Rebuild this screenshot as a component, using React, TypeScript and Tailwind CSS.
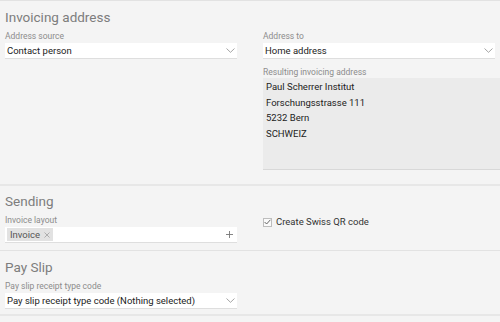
import React from "react";

function Chevron() {
  return (
    <svg width="9" height="5" viewBox="0 0 9 5" className="shrink-0">
      <polyline points="0.5,0.5 4.5,4.3 8.5,0.5" fill="none" stroke="#9a9a9a" strokeWidth="0.9" />
    </svg>
  );
}

function Label({ children }: { children: React.ReactNode }) {
  return <div className="mt-[6px] mb-[2px] text-[8.5px] leading-[10px] text-[#8c8c8c]">{children}</div>;
}

function SectionTitle({ children }: { children: React.ReactNode }) {
  return <div className="text-[13.5px] leading-[16px] text-[#7d7d7d]">{children}</div>;
}

function Select({ value }: { value: string }) {
  return (
    <div className="flex h-[16px] items-center justify-between border-b border-[#dedede] bg-white pl-[2px] pr-[2px]">
      <span className="text-[9.5px] leading-[16px] text-[#222]">{value}</span>
      <Chevron />
    </div>
  );
}

export default function App() {
  const address = ["Paul Scherrer Institut", "Forschungsstrasse 111", "5232 Bern", "SCHWEIZ"];

  return (
    <div
      className="h-[322px] w-[500px] overflow-hidden border-t border-[#e2e2e2] bg-[#f4f4f4]"
      style={{ fontFamily: "Roboto, 'Liberation Sans', sans-serif" }}
    >
      {/* Invoicing address */}
      <section className="border-b-2 border-[#e7e7e7] px-[5px] pt-[8px] pb-[14px]">
        <SectionTitle>Invoicing address</SectionTitle>
        <div className="grid grid-cols-2 gap-x-[26px]">
          <div>
            <Label>Address source</Label>
            <Select value="Contact person" />
          </div>
          <div>
            <Label>Address to</Label>
            <Select value="Home address" />
            <div className="mt-[8px] mb-[1px] text-[8.5px] leading-[10px] text-[#8c8c8c]">
              Resulting invoicing address
            </div>
            <div className="-mr-[5px] h-[92px] border-b border-[#d8d8d8] bg-[#ebebeb] pl-[3px] pt-[1px]">
              {address.map((line) => (
                <div key={line} className="text-[9.5px] leading-[15.6px] text-[#222]">
                  {line}
                </div>
              ))}
            </div>
          </div>
        </div>
      </section>

      {/* Sending */}
      <section className="border-b border-[#e2e2e2] px-[5px] pt-[7px] pb-[7px]">
        <SectionTitle>Sending</SectionTitle>
        <div className="grid grid-cols-2 gap-x-[26px]">
          <div>
            <Label>Invoice layout</Label>
            <div className="flex h-[16px] items-center justify-between border-b border-[#dedede] bg-white pl-[2px] pr-[4px]">
              <span className="flex h-[13px] items-center gap-[4px] bg-[#e2e2e2] pl-[3px] pr-[3px] text-[9.5px] leading-[13px] text-[#555]">
                Invoice
                <svg width="6" height="6" viewBox="0 0 6 6">
                  <path d="M0.5 0.5 L5.5 5.5 M5.5 0.5 L0.5 5.5" stroke="#a0a0a0" strokeWidth="0.8" />
                </svg>
              </span>
              <svg width="7" height="7" viewBox="0 0 7 7">
                <path d="M3.5 0 V7 M0 3.5 H7" stroke="#777" strokeWidth="0.9" />
              </svg>
            </div>
          </div>
          <div className="flex items-start pt-[7px]">
            <div className="flex items-center gap-[4px]">
              <span className="flex h-[9px] w-[9px] items-center justify-center border border-[#bdbdbd] bg-[#fafafa]">
                <svg width="7" height="6" viewBox="0 0 7 6">
                  <polyline points="0.6,3 2.6,5 6.4,0.8" fill="none" stroke="#555" strokeWidth="0.9" />
                </svg>
              </span>
              <span className="text-[9.5px] leading-[12px] text-[#333]">Create Swiss QR code</span>
            </div>
          </div>
        </div>
      </section>

      {/* Pay Slip */}
      <section className="border-b-2 border-[#e7e7e7] px-[5px] pt-[8px] pb-[5px]">
        <SectionTitle>Pay Slip</SectionTitle>
        <div className="grid grid-cols-2 gap-x-[26px]">
          <div>
            <Label>Pay slip receipt type code</Label>
            <Select value="Pay slip receipt type code (Nothing selected)" />
          </div>
        </div>
      </section>
    </div>
  );
}
